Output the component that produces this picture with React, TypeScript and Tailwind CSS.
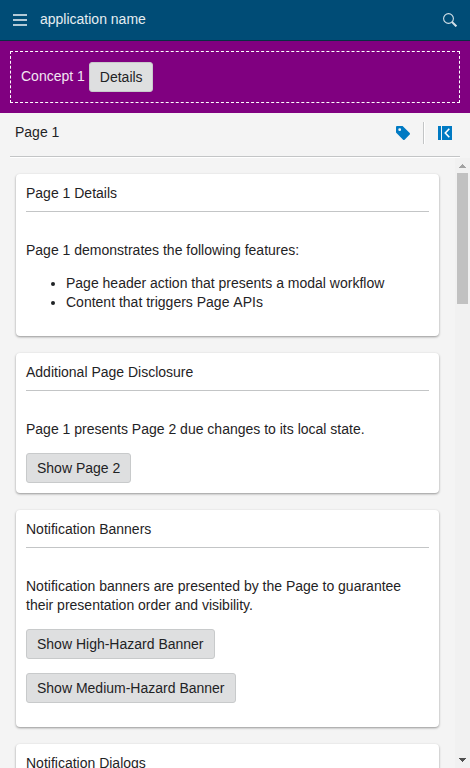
import type { ReactNode } from 'react';

function Button({ children, className = '' }: { children: ReactNode; className?: string }) {
  return (
    <button
      className={`h-[30px] rounded-[3px] border border-[#c8cacb] bg-[#dedfe0] px-[10px] text-[14px] leading-[19px] text-[#1f2325] ${className}`}
    >
      {children}
    </button>
  );
}

function Card({ title, children, className = '' }: { title: string; children?: ReactNode; className?: string }) {
  return (
    <section
      className={`shrink-0 rounded-[4px] bg-white px-[10px] pt-[10px] shadow-[0_1px_3px_rgba(0,0,0,0.18),0_1px_2px_rgba(0,0,0,0.24)] ${className}`}
    >
      <h2 className="border-b border-[#c3c5c6] pb-2">{title}</h2>
      {children}
    </section>
  );
}

export default function App() {
  return (
    <div className="flex h-[768px] w-[470px] flex-col overflow-hidden bg-[#f4f4f4] font-['Liberation_Sans',Arial,sans-serif] text-[14px] leading-[19px] text-[#1f2325]">
      <header className="flex h-[41px] shrink-0 items-center border-b border-[#082e42] bg-[#004c76] pr-[13px] pl-[13px] text-[#e5edf1]">
        <svg className="mr-[13px]" width="14" height="14" viewBox="0 0 14 14" shapeRendering="crispEdges">
          <path d="M0 1h14v2H0zM0 6h14v2H0zM0 11h14v2H0z" fill="#b2c9d6" />
        </svg>
        <span className="grow pb-[2px]">application name</span>
        <svg width="14" height="14" viewBox="0 0 14 14" fill="none" stroke="#d2e0e8">
          <circle cx="5.5" cy="5.5" r="4.9" strokeWidth="1.1" />
          <path d="M9 9l4.4 4.4" strokeWidth="2" />
        </svg>
      </header>

      <div className="h-[72px] shrink-0 bg-[#800080] p-[10px]">
        <div className="flex h-[52px] items-center border border-dashed border-white px-[10px] text-[#f2e6f2]">
          <span className="mr-1 pb-[2px]">Concept 1</span>
          <Button className="w-[64px]">Details</Button>
        </div>
      </div>

      <div className="mx-[10px] flex h-[44px] shrink-0 items-center border-b border-[#c3c5c6] pr-[8px] pl-[5px] shadow-[0_1px_0_#fff]">
        <h1 className="grow pb-[5px]">Page 1</h1>
        <svg className="mb-[3px]" width="14" height="14" viewBox="0 0 14 14">
          <path fillRule="evenodd" d="M0 1q0-1 1-1h5.6l7.1 7.1q.6.8 0 1.5l-5.1 5.1q-.8.6-1.5 0L0 6.6zM3.7 2.3a1.4 1.4 0 1 0 0 2.8 1.4 1.4 0 1 0 0-2.8z" fill="#007ac3" />
        </svg>
        <div className="mr-[13px] mb-[3px] ml-[13px] h-[22px] w-[2px] border-r border-l border-r-white border-l-[#c3c5c6]" />
        <svg className="mb-[3px]" width="14" height="14" viewBox="0 0 14 14">
          <path d="M0 0h3v14H0zM4 0h10v14H4z" fill="#007ac3" />
          <path d="M11.3 2.8L7.3 7l4 4.2" fill="none" stroke="#fff" strokeWidth="1.6" />
        </svg>
      </div>

      <main className="mt-px flex min-h-0 grow">
        <div className="flex w-[455px] shrink-0 flex-col gap-[17px] overflow-hidden pt-4 pr-4 pl-4">
          <Card title="Page 1 Details" className="h-[162px]">
            <p className="mt-[29px]">Page 1 demonstrates the following features:</p>
            <ul className="mt-[14px] list-disc pl-[40px]">
              <li>Page header action that presents a modal workflow</li>
              <li className="[font-kerning:none]">Content that triggers Page APIs</li>
            </ul>
          </Card>
          <Card title="Additional Page Disclosure" className="h-[140px]">
            <p className="mt-[29px] mb-[14px]">Page 1 presents Page 2 due changes to its local state.</p>
            <Button>Show Page 2</Button>
          </Card>
          <Card title="Notification Banners" className="h-[217px]">
            <p className="mt-[29px] mb-[14px]">
              Notification banners are presented by the Page to guarantee their presentation order and visibility.
            </p>
            <div className="flex flex-col items-start gap-[14px]">
              <Button>Show High-Hazard Banner</Button>
              <Button>Show Medium-Hazard Banner</Button>
            </div>
          </Card>
          <Card title="Notification Dialogs" className="h-[140px]" />
        </div>

        <div className="flex w-[15px] shrink-0 flex-col items-center bg-[#f1f1f1]">
          <svg className="mt-[6px] mb-[5px]" width="7" height="4" viewBox="0 0 7 4" shapeRendering="crispEdges">
            <path d="M3 0h1v1h1v1h1v1h1v1H0V3h1V2h1V1h1z" fill="#a3a3a3" />
          </svg>
          <div className="h-[131px] w-[11px] bg-[#c1c1c1]" />
          <svg className="mt-auto mb-[6px]" width="7" height="4" viewBox="0 0 7 4" shapeRendering="crispEdges">
            <path d="M0 0h7v1H6v1H5v1H4v1H3V3H2V2H1V1H0z" fill="#505050" />
          </svg>
        </div>
      </main>
    </div>
  );
}
